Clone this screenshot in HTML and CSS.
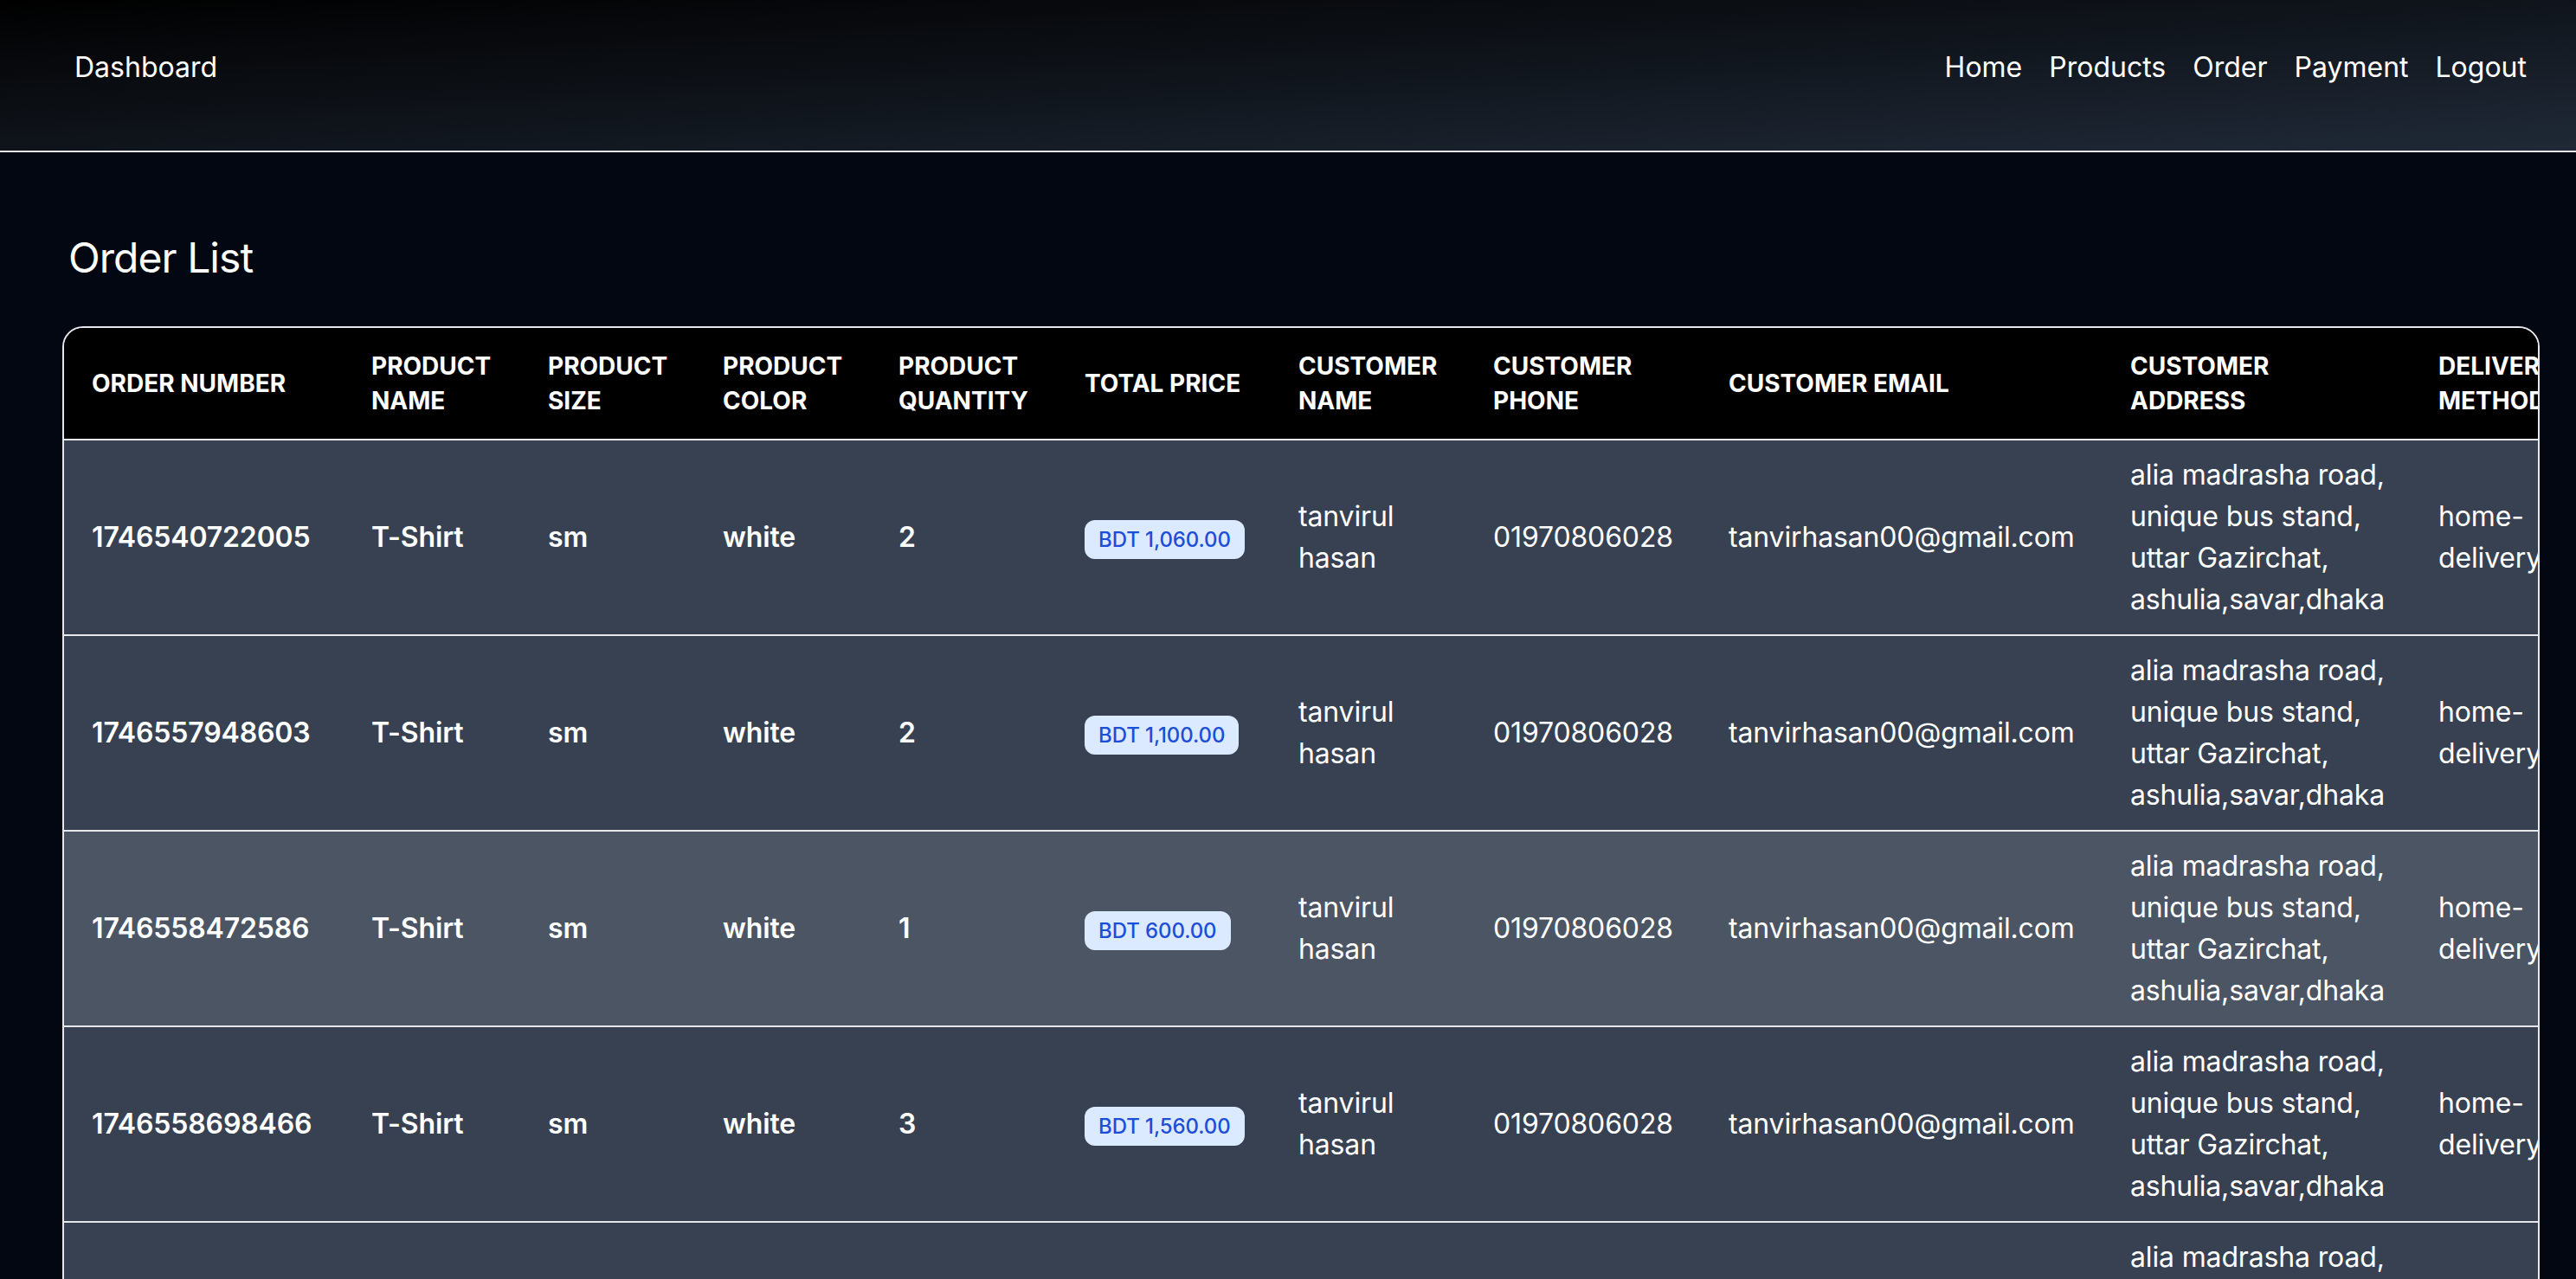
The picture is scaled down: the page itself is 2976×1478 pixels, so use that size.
FILE: index.html
```html
<!DOCTYPE html>
<html lang="en">
<head>
<meta charset="utf-8">
<title>Order List</title>
<link rel="stylesheet" href="styles.css">
</head>
<body>
<header class="navbar">
  <a class="brand" href="#">Dashboard</a>
  <nav class="nav-links">
    <a href="#">Home</a>
    <a href="#">Products</a>
    <a href="#">Order</a>
    <a href="#">Payment</a>
    <a href="#">Logout</a>
  </nav>
</header>
<main class="main">
  <h1 class="page-title">Order List</h1>
  <div class="table-wrap">
    <table class="orders">
      <thead>
        <tr>
          <th class="c-order nowrap">Order Number</th>
          <th class="c-name">Product Name</th>
          <th class="c-size">Product Size</th>
          <th class="c-color">Product Color</th>
          <th class="c-qty">Product Quantity</th>
          <th class="c-price nowrap">Total Price</th>
          <th class="c-cname">Customer Name</th>
          <th class="c-phone">Customer Phone</th>
          <th class="c-email nowrap">Customer Email</th>
          <th class="c-addr">Customer Address</th>
          <th class="c-deliv">Delivery Method</th>
        </tr>
      </thead>
      <tbody>
        <tr>
          <td class="strong">1746540722005</td>
          <td class="strong">T-Shirt</td>
          <td class="strong">sm</td>
          <td class="strong">white</td>
          <td class="strong">2</td>
          <td><span class="badge">BDT 1,060.00</span></td>
          <td>tanvirul hasan</td>
          <td>01970806028</td>
          <td>tanvirhasan00@gmail.com</td>
          <td class="c-addr">alia madrasha road, unique bus stand, uttar Gazirchat, ashulia,savar,dhaka</td>
          <td>home-delivery</td>
        </tr>
        <tr>
          <td class="strong">1746557948603</td>
          <td class="strong">T-Shirt</td>
          <td class="strong">sm</td>
          <td class="strong">white</td>
          <td class="strong">2</td>
          <td><span class="badge">BDT 1,100.00</span></td>
          <td>tanvirul hasan</td>
          <td>01970806028</td>
          <td>tanvirhasan00@gmail.com</td>
          <td class="c-addr">alia madrasha road, unique bus stand, uttar Gazirchat, ashulia,savar,dhaka</td>
          <td>home-delivery</td>
        </tr>
        <tr class="row-hover">
          <td class="strong">1746558472586</td>
          <td class="strong">T-Shirt</td>
          <td class="strong">sm</td>
          <td class="strong">white</td>
          <td class="strong">1</td>
          <td><span class="badge">BDT 600.00</span></td>
          <td>tanvirul hasan</td>
          <td>01970806028</td>
          <td>tanvirhasan00@gmail.com</td>
          <td class="c-addr">alia madrasha road, unique bus stand, uttar Gazirchat, ashulia,savar,dhaka</td>
          <td>home-delivery</td>
        </tr>
        <tr>
          <td class="strong">1746558698466</td>
          <td class="strong">T-Shirt</td>
          <td class="strong">sm</td>
          <td class="strong">white</td>
          <td class="strong">3</td>
          <td><span class="badge">BDT 1,560.00</span></td>
          <td>tanvirul hasan</td>
          <td>01970806028</td>
          <td>tanvirhasan00@gmail.com</td>
          <td class="c-addr">alia madrasha road, unique bus stand, uttar Gazirchat, ashulia,savar,dhaka</td>
          <td>home-delivery</td>
        </tr>
        <tr>
          <td class="strong">1746559120874</td>
          <td class="strong">T-Shirt</td>
          <td class="strong">sm</td>
          <td class="strong">white</td>
          <td class="strong">2</td>
          <td><span class="badge">BDT 1,100.00</span></td>
          <td>tanvirul hasan</td>
          <td>01970806028</td>
          <td>tanvirhasan00@gmail.com</td>
          <td class="c-addr">alia madrasha road, unique bus stand, uttar Gazirchat, ashulia,savar,dhaka</td>
          <td>home-delivery</td>
        </tr>
      </tbody>
    </table>
  </div>
</main>
</body>
</html>
```

FILE: styles.css
```css
* {
  box-sizing: border-box;
}

html, body {
  margin: 0;
  padding: 0;
}

body {
  background: #030712;
  color: #ffffff;
  font-family: Inter, "Noto Sans", "Liberation Sans", sans-serif;
  min-height: 100vh;
}

a {
  color: inherit;
  text-decoration: none;
}

/* ---------- Navbar ---------- */
.navbar {
  height: 176px;
  display: flex;
  justify-content: space-between;
  align-items: flex-start;
  padding: 54px 57px 0 86px;
  background: linear-gradient(to bottom right, #000000, #1f2937);
  border-bottom: 2px solid #e5e7eb;
}

.brand {
  font-size: 32px;
  line-height: 48px;
  color: #ffffff;
}

.nav-links {
  display: flex;
  gap: 31px;
}

.nav-links a {
  font-size: 32px;
  line-height: 48px;
  color: #ffffff;
}

/* ---------- Main ---------- */
.main {
  padding: 90px 42px 0 72px;
}

.page-title {
  margin: 0 0 47px 0;
  padding-left: 7px;
  font-size: 48px;
  line-height: 64px;
  font-weight: 400;
  letter-spacing: -0.02em;
  color: #ffffff;
}

.table-wrap {
  border: 2px solid #e5e7eb;
  border-radius: 24px;
  overflow: hidden;
}

.orders {
  table-layout: fixed;
  border-collapse: separate;
  border-spacing: 0;
  width: 2911px;
}

.orders th {
  background: #000000;
  color: #ffffff;
  font-size: 28px;
  line-height: 40px;
  font-weight: 700;
  text-transform: uppercase;
  text-align: left;
  vertical-align: middle;
  padding: 24px 32px;
  border-bottom: 2px solid #e5e7eb;
}

.orders td {
  background: #374151;
  color: #ffffff;
  font-size: 32px;
  line-height: 48px;
  font-weight: 400;
  letter-spacing: -0.15px;
  text-align: left;
  vertical-align: middle;
  padding: 16px 32px;
  border-bottom: 2px solid #e5e7eb;
}

.orders .row-hover td {
  background: #4b5563;
}

.orders td.strong {
  font-weight: 600;
}

.orders .c-addr {
  padding-right: 24px;
}

.nowrap {
  white-space: nowrap;
}

.c-order { width: 323px; }
.c-name { width: 204px; }
.c-size { width: 202px; }
.c-color { width: 203px; }
.c-qty { width: 215px; }
.c-price { width: 247px; }
.c-cname { width: 225px; }
.c-phone { width: 272px; }
.c-email { width: 464px; }
.c-addr { width: 356px; }
.c-deliv { width: 200px; }

.badge {
  display: inline-block;
  background: #dbeafe;
  color: #1d4ed8;
  font-size: 24px;
  line-height: 33px;
  font-weight: 500;
  letter-spacing: -0.1px;
  padding: 6px 16px;
  border-radius: 12px;
  white-space: nowrap;
}
```
